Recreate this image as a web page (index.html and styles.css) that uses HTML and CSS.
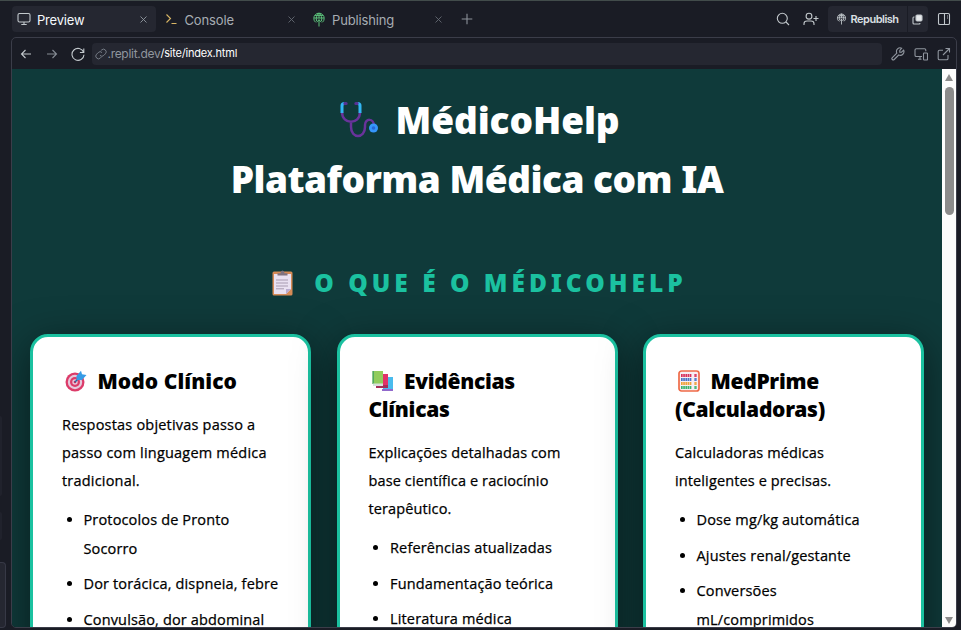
FILE: index.html
```html
<!DOCTYPE html>
<html lang="pt-BR">
<head>
<meta charset="utf-8">
<title>MédicoHelp</title>
<link rel="stylesheet" href="styles.css">
</head>
<body>
<div class="app">
  <aside class="edge"><i class="stub s1"></i><i class="stub s2"></i><i class="stub s3"></i></aside>
  <header class="tabs">
    <div class="tab active">
      <svg class="ico" width="14" height="14" viewBox="0 0 14 14"><rect x="1" y="1.5" width="12" height="8.5" rx="1.5"/><path d="M7 10v2.5M4.3 12.5h5.4"/></svg>
      <span class="label t-preview">Preview</span><svg class="ico close" width="7" height="7" viewBox="0 0 7 7"><path d="M.5.5l6 6M6.500.5l-6 6"/></svg>
    </div>
    <div class="tab">
      <svg class="ico yellow" width="14" height="14" viewBox="0 0 14 14"><path d="M1.500 2.500l4 4-4 4M6.500 11.500h5"/></svg>
      <span class="label t-console">Console</span><svg class="ico close" width="7" height="7" viewBox="0 0 7 7"><path d="M.5.5l6 6M6.500.5l-6 6"/></svg>
    </div>
    <div class="tab">
      <svg class="ico green" width="14" height="15" viewBox="0 0 14 15"><path d="M3.500 10.200A5.200 5.200 0 1 1 10.500 10.200M2 6h10M4.500 9C3.700 6 5 2 7 1.200C9 2 10.300 6 9.500 9M3 3.400h8M7 1.200v5M7 14.500V7.500M4.500 10.300L7 7.800 9.500 10.300"/></svg>
      <span class="label t-pub">Publishing</span><svg class="ico close" width="7" height="7" viewBox="0 0 7 7"><path d="M.5.5l6 6M6.500.5l-6 6"/></svg>
    </div>
    <svg class="ico plus" width="12" height="12" viewBox="0 0 12 12"><path d="M6 .7v10.600M.7 6h10.600"/></svg>
    <div class="actions">
      <svg class="ico" width="14" height="14" viewBox="0 0 14 14"><circle cx="6.300" cy="6.300" r="5"/><path d="M10 10l3 3"/></svg>
      <svg class="ico person" width="16" height="14" viewBox="0 0 16 14"><circle cx="6" cy="4.200" r="2.900"/><path d="M1 13v-1.300c0-1.700 1.300-2.700 3-2.700h4c1.700 0 3 1 3 2.700V13M13 4v5M10.500 6.500h5"/></svg>
      <div class="republish">
        <div class="rep-main"><svg class="ico" width="11" height="12" viewBox="0 0 14 15"><path d="M3.500 10.200A5.200 5.200 0 1 1 10.500 10.200M2 6h10M4.500 9C3.700 6 5 2 7 1.200C9 2 10.300 6 9.500 9M3 3.400h8M7 1.200v5M7 14.500V7.500M4.500 10.300L7 7.800 9.500 10.300"/></svg><span>Republish</span></div>
        <div class="rep-side"><svg class="ico" width="11" height="11" viewBox="0 0 11 11"><path d="M2.500 3H1.700Q1 3 1 4v5q0 1 1 1h5q1 0 1-1"/><rect x="4" y="1" width="6" height="6" rx="1.200" fill="#e8eaed"/></svg></div>
      </div>
      <svg class="ico" width="14" height="14" viewBox="0 0 14 14"><rect x="1.500" y="1.500" width="11" height="11" rx="1.300"/><path d="M7.500 1.500v11"/><path class="thin" d="M10 4h1M10 6h1"/></svg>
    </div>
  </header>

  <section class="frame">
    <div class="bar">
      <svg class="ico back" width="12" height="12" viewBox="0 0 12 12"><path d="M11 6H1.500M5.500 2l-4 4 4 4"/></svg>
      <svg class="ico fwd" width="12" height="12" viewBox="0 0 12 12"><path d="M1 6h9.500M6.500 2l4 4-4 4"/></svg>
      <svg class="ico reload" width="14" height="14" viewBox="0 0 14 14"><path d="M12.800 1.500v4H8.900M12.600 5.200A6 6 0 1 0 13 7.700"/></svg>
      <div class="url"><svg class="ico link" width="12" height="12" viewBox="0 0 12 12"><path d="M5 7.400a2.600 2.600 0 0 0 3.800 0l1.600-1.600a2.600 2.600 0 0 0-3.800-3.800l-.9.900M7 4.600a2.600 2.600 0 0 0-3.800 0L1.600 6.200a2.600 2.600 0 0 0 3.800 3.800l.9-.9"/></svg><span class="host">.replit.dev</span><span class="path">/site/index.html</span></div>
      <svg class="ico tool" width="14" height="14" viewBox="0 0 14 14"><path d="M8.800 3.500v1.700h1.700l2.100-2.100a3.700 3.700 0 0 1-4.900 4.900l-4.500 4.500a1.300 1.300 0 0 1-1.900-1.900l4.500-4.500a3.700 3.700 0 0 1 4.900-4.900z"/></svg>
      <svg class="ico tool" width="14" height="14" viewBox="0 0 14 14"><path d="M8 9.500H2.300q-1.300 0-1.300-1.300V3q0-1.300 1.300-1.300h8.200q1.300 0 1.300 1.300v1.200M4 12.300h3.500M6 9.500v2.800"/><rect x="9.500" y="6" width="4" height="7" rx=".8"/></svg>
      <svg class="ico tool" width="14" height="14" viewBox="0 0 14 14"><path d="M8.500 1.500h4v4M12.500 1.500l-6.500 6.500M11 8v3.500q0 1.300-1.300 1.300H2.500q-1.300 0-1.300-1.300V4.600q0-1.300 1.300-1.300H6"/></svg>
    </div>
    <div class="view">
      <main class="page">
        <h1><span class="h1a"><svg class="steth" width="40" height="38" viewBox="0 0 40 38" fill="none"><path d="M3 11C3 24 21 24 21 11M12 20.500v5.500c0 12 14 12 14 0v-2c0-7 9-7 9 1" stroke="#69339b" stroke-width="2.500"/><path d="M3 12V4.500Q3 2.500 5.500 2.500M21 12V4.500Q21 2.500 18.500 2.500" stroke="#32b6f4" stroke-width="3"/><path d="M5.800 2.500h1.400M16.800 2.500h1.400" stroke="#573294" stroke-width="3" stroke-linecap="round"/><circle cx="34.500" cy="27" r="4.500" fill="#3596fb"/><circle cx="34.500" cy="27" r="1.800" fill="#2769d9"/></svg>MédicoHelp</span><span class="h1b">Plataforma Médica com IA</span></h1>
        <h2><svg width="21" height="26" viewBox="0 0 21 26"><rect x=".5" y="1.500" width="20" height="24" rx="1.500" fill="#d68b56"/><path d="M2 4h17v15l-5 5H2z" fill="#e9e1f1"/><path d="M19 19h-5v5z" fill="#b9acd0"/><path d="M5.500 5.500V3.200h3Q8.500.5 10.500.5t2 2.700h3v2.300z" fill="#80737f"/><path d="M4 10h12M4 13h12M4 16h12M4 18.800h8" stroke="#a79bb0"/></svg><span>O QUE É O MÉDICOHELP</span></h2>
        <div class="cards">
          <article class="card">
            <h3 class="wide"><svg class="emo" width="22" height="22" viewBox="0 0 22 22"><circle cx="10" cy="12" r="9.500" fill="#dc3b69"/><circle cx="10" cy="12" r="7.200" fill="#e5c9dc"/><circle cx="10" cy="12" r="5" fill="#dc3b69"/><circle cx="10" cy="12" r="2.700" fill="#e5c9dc"/><circle cx="10" cy="12" r="1.300" fill="#c9305e"/><path d="M10 12l6-6" stroke="#226aa6" stroke-width="1.500"/><path d="M11.500 10V6L16 .8l1 3.400 4.500.8-4.500 5z" fill="#369be5"/></svg>Modo Clínico</h3>
            <p class="wide">Respostas objetivas passo a<br>passo com linguagem médica<br>tradicional.</p>
            <ul><li>Protocolos de Pronto<br>Socorro</li><li>Dor torácica, dispneia, febre</li><li>Convulsão, dor abdominal</li></ul>
          </article>
          <article class="card">
            <h3><svg class="emo" width="22" height="22" viewBox="0 0 22 22"><path d="M11 7h10v13H11z" fill="#49bbed"/><path d="M10 19h11v2H10z" fill="#9169cc"/><path d="M5 4h11v13H5z" fill="#e13269"/><path d="M4 15h12v3H4z" fill="#a52d58"/><path d="M.5 1H11v13H.5z" fill="#91cc5c"/><path d="M.5 1h1.500v13H.5z" fill="#50a864"/><path d="M1 13.500h10V16H1z" fill="#d7e0dc"/></svg>Evidências<br>Clínicas</h3>
            <p>Explicações detalhadas com<br>base científica e raciocínio<br>terapêutico.</p>
            <ul><li>Referências atualizadas</li><li>Fundamentação teórica</li><li>Literatura médica</li></ul>
          </article>
          <article class="card">
            <h3><svg class="emo" width="22" height="22" viewBox="0 0 22 22"><rect x="1" y="1" width="20" height="20" rx="2.500" fill="#f7eef3" stroke="#ef6b48" stroke-width="1.700"/><path d="M3 5.500h16" stroke="#d8315b" stroke-width="3" stroke-dasharray="1.700 .5"/><path d="M3 9.500h16" stroke="#4a73c5" stroke-width="3" stroke-dasharray="1.700 .5"/><path d="M3 13.500h16" stroke="#eea239" stroke-width="3" stroke-dasharray="1.700 .5"/><path d="M3 17.500h16" stroke="#3ab36f" stroke-width="3" stroke-dasharray="1.700 .5"/><path d="M15 3v16" stroke="#f7eef3" stroke-width="2.500"/></svg>MedPrime<br>(Calculadoras)</h3>
            <p>Calculadoras médicas<br>inteligentes e precisas.</p>
            <ul><li>Dose mg/kg automática</li><li>Ajustes renal/gestante</li><li>Conversões<br>mL/comprimidos</li></ul>
          </article>
        </div>
      </main>
      <div class="scroll"><i class="up"></i><i class="thumb"></i><i class="down"></i></div>
    </div>
  </section>
</div>
</body>
</html>
```

FILE: styles.css
```css
* { box-sizing: border-box; }
body { margin: 0; background: #1a1c25; overflow: hidden; }
.app {
  width: 961px; height: 630px; overflow: hidden;
  display: grid; grid-template: 36px 591px / 12px 945px;
  border-top: 1px solid #424c4b;
  font-family: Inter, "Liberation Sans", sans-serif;
}
.edge { grid-row: 1 / 3; display: flex; flex-direction: column; }
.stub { display: block; background: #20222c; width: 2px; height: 80px; border-radius: 0 4px 4px 0; }
.s1 { margin-top: 415px; }
.s2 { height: 28px; margin-top: 16px; }
.s3 { width: 6px; height: 66px; margin-top: 22px; background: #252731; border: 1px solid #373946; border-left: 0; }
.ico { flex: none; fill: none; stroke: #c2c8cc; stroke-width: 1.1; }
.thin { stroke-width: .9; }
.tabs { display: flex; align-items: flex-start; padding-top: 5px; }
.tab { display: flex; align-items: center; width: 144px; height: 26px; padding: 0 9px 0 5px; margin-right: 3.500px; border-radius: 4px; }
.tab.active { background: #252731; }
.label { margin-left: 6px; padding-top: 1px; font: 13px/26px Inter, sans-serif; color: #a7adb3; }
.active .label { color: #f5f9fc; }
.t-preview { letter-spacing: -.2px; }
.t-console { letter-spacing: -.15px; }
.t-pub { letter-spacing: -.15px; }
.close { margin-left: auto; stroke: #646a73; stroke-width: .9; }
.active .close { stroke: #9298a0; }
.yellow { stroke: #d9b665; }
.green { stroke: #5cc27b; stroke-width: 1; }
.plus { margin: 7px 0 0 6px; stroke: #8b919a; }
.actions { margin-left: auto; display: flex; align-items: center; gap: 13px; height: 26px; padding-right: 6px; }
.republish { display: flex; gap: 1px; margin-left: -4px; margin-right: -4px; }
.rep-main, .rep-side { display: flex; align-items: center; height: 26px; background: #252731; }
.rep-main { width: 79px; padding-left: 8px; border-radius: 4px 0 0 4px; font-size: 11px; font-weight: 600; letter-spacing: -.5px; color: #dce0e4; }
.rep-main span { margin-left: 3.500px; }
.rep-side { width: 20px; padding-left: 4px; border-radius: 0 4px 4px 0; }
.frame { border: 1px solid #3b3d49; border-radius: 5px; overflow: hidden; margin-left: -1px; }
.bar { height: 31px; display: flex; align-items: center; padding-left: 7.500px; }
.fwd { margin-left: 14px; stroke: #858b94; }
.reload { margin-left: 13px; }
.url { display: flex; width: 790px; height: 22px; margin: 0 9px 0 7px; padding-left: 3px; align-items: center; background: #252731; border-radius: 4px; white-space: nowrap; flex: none; }
.link { stroke: #767c86; stroke-width: 1; }
.host { margin-left: 1px; font-size: 12px; letter-spacing: -.3px; color: #90969e; }
.path { margin-top: -2px; font-size: 11px; letter-spacing: -.2px; color: #fff; }
.tool { stroke: #90969f; margin-right: 9px; }
.view { display: flex; height: 558px; }
.page { width: 930px; height: 558px; overflow: hidden; background: #0f3a3a; padding: 21px 18px 0 18px; font-family: "Open Sans", "Noto Sans", sans-serif; }
h1, h2, h3, p, ul { margin: 0; }
h1 { height: 120px; color: #fff; font: 900 37px/60px "Noto Sans", sans-serif; white-space: nowrap; }
.h1a, .h1b { display: flex; justify-content: center; align-items: center; height: 59px; }
.h1b { height: 60px; }
.h1a { padding-left: 4px; letter-spacing: -.1px; }
.h1b { letter-spacing: -.5px; }
.steth { margin-right: 17px; margin-top: 1px; }
h2 { height: 28px; margin-top: 59px; display: flex; align-items: center; justify-content: center; font: 900 24.500px/28px "Noto Sans", sans-serif; letter-spacing: 4px; color: #1bc1a0; padding-left: 5px; white-space: nowrap; }
h2 span { margin-left: 21px; }
.cards { display: grid; grid-template-columns: repeat(3, 281px); gap: 25.500px; margin-top: 37px; }
.card { height: 360px; background: #fff; border: 3px solid #1bc1a0; border-radius: 18px; padding: 30px 10px 0 29px; box-shadow: 0 10px 40px rgba(0,0,0,.5); white-space: nowrap; color: #000; }
h3 { font: 900 21px/28px "Noto Sans", sans-serif; letter-spacing: -.3px; }
h3.wide { letter-spacing: .05px; }
.emo { margin: 0 10.500px 0 3px; vertical-align: -3px; }
p { margin-top: 16px; font-size: 14.500px; line-height: 28px; letter-spacing: .12px; -webkit-text-stroke: .25px #000; }
p.wide { letter-spacing: .2px; }
ul { margin-top: 11px; padding-left: 21.500px; font-size: 14.500px; line-height: 28.500px; letter-spacing: .15px; -webkit-text-stroke: .25px #000; }
li { margin-bottom: 7px; }
.scroll { width: 14px; background: #fcfcfc; display: flex; flex-direction: column; align-items: center; }
.up, .down { width: 0; height: 0; border: 4.500px solid transparent; }
.up { border-top: 0; border-bottom: 7px solid #8b8b8b; margin-top: 5px; }
.thumb { width: 9px; height: 128px; margin-top: 6px; border-radius: 5px; background: #8b8b8b; }
.down { border-bottom: 0; border-top: 7px solid #8b8b8b; margin-top: auto; margin-bottom: 3px; }
```
